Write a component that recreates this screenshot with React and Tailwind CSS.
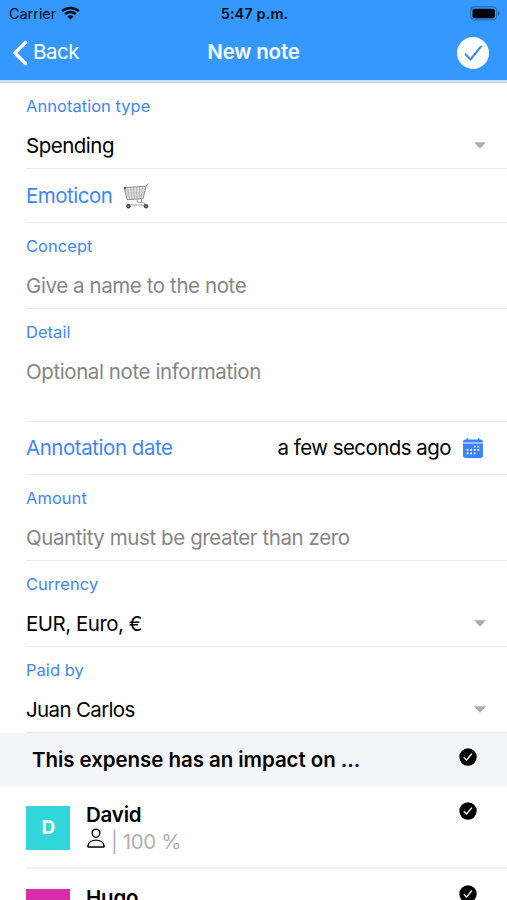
import React, { useState } from 'react';
import { IoPersonOutline } from 'react-icons/io5';

const people = [
  { name: 'David', share: '100 %', color: 'bg-[#31d6da]' },
  { name: 'Hugo', share: '100 %', color: 'bg-[#d92eaa]' },
];

function WifiIcon() {
  return (
    <svg width="19" height="14" viewBox="0 0 19 14" fill="none" stroke="#000814" strokeWidth="2.5">
      <path d="M1.2 5.1C5.8.8 13.2.8 17.8 5.1" />
      <path d="M4.2 8.2c3-2.8 7.6-2.8 10.6 0" />
      <path d="M9.5 13.6 6.3 10.5c1.8-1.7 4.6-1.7 6.4 0z" fill="#000814" stroke="none" />
    </svg>
  );
}

function BatteryIcon() {
  return (
    <svg width="30" height="15" viewBox="0 0 30 15" fill="none">
      <rect x=".7" y=".9" width="26" height="13" rx="3.6" stroke="#2570b8" strokeWidth="1.2" />
      <rect x="2.5" y="2.7" width="22.4" height="9.5" rx="2" fill="#000" />
      <path d="M28 5.2c2 .8 2 3.8 0 4.6z" fill="#225f9f" />
    </svg>
  );
}

function CartIcon() {
  return (
    <svg width="27" height="28" viewBox="0 0 27 28" fill="none">
      <path d="M1.5 5.5 22.5 4.8 20 16.5 4 18z" fill="#e2e2e2" />
      <path d="M4.5 5.4 6.5 17.5M7.5 5.1 9 17.3M10.5 4.9l1 12M13.5 4.7l.5 12M16.5 4.4v12.3M19.5 4.1 18 16.6" stroke="#a5a5a5" strokeWidth=".7" />
      <path d="M2 8.5 21.7 7M2.7 11.5 21 10.2M3.4 14.5 20.5 13.3" stroke="#b8b8b8" strokeWidth=".6" />
      <path d="M25.5 1.5 23 4.2 1.2 5.6 4 17.7 20.2 16.6 23 4.2" stroke="#8f8f8f" strokeWidth="1" strokeLinejoin="round" />
      <path d="M18.5 17v3l3 1.2v2L4 22.8M14 17.3l.5 3h5" stroke="#999" strokeWidth="1" />
      <circle cx="2" cy="6.2" r="1.1" fill="#555" />
      <circle cx="5.5" cy="24.3" r="2.2" fill="#4b4b4b" />
      <circle cx="23" cy="24.3" r="2.2" fill="#4b4b4b" />
      <circle cx="5.5" cy="24.3" r=".7" fill="#aaa" />
      <circle cx="23" cy="24.3" r=".7" fill="#aaa" />
    </svg>
  );
}

function CalendarIcon() {
  return (
    <svg width="20" height="20" viewBox="0 0 20 20" fill="#3b82fb">
      <path d="M0 4.4C0 2.6 1 1.6 2.6 1.6h.9V.8a.8.8 0 0 1 1.6 0v.8h9.8V.8a.8.8 0 0 1 1.6 0v.8h.9c1.6 0 2.6 1 2.6 2.8z" />
      <path d="M0 5.5h20v11.7c0 1.800-1 2.800-2.800 2.800H2.800C1 20 0 19 0 17.200z" />
      <g fill="#fff">
        <path d="M10.8 7.700h1.800v1.800h-1.800zM14.400 7.700h1.800v1.800h-1.800z" />
        <path d="M3.600 11h1.800v1.800H3.600zM7.200 11H9v1.800H7.200zM10.800 11h1.800v1.800h-1.800zM14.400 11h1.800v1.800h-1.800z" />
        <path d="M3.600 14.400h1.800v1.800H3.600zM7.200 14.400H9v1.800H7.200zM10.800 14.400h1.800v1.800h-1.800z" />
      </g>
    </svg>
  );
}

function CheckBadge() {
  return (
    <svg width="18" height="18" viewBox="0 0 18 18" fill="none">
      <circle cx="9" cy="9" r="8.7" fill="#000" />
      <path d="m5.2 9.7 2.3 2.4 5.1-6" stroke="#e2e2e2" strokeWidth="1.5" strokeLinecap="round" strokeLinejoin="round" />
    </svg>
  );
}

function Field({ label, children, select, height = 'h-[86px]' }) {
  return (
    <div className={`ml-[26px] shrink-0 border-b border-[#ebebeb] ${height}`}>
      <div className="pt-[12px] text-[16.5px] leading-[22px] tracking-[0.03px] text-[#4286f5]">{label}</div>
      <div className="mt-[15px] flex items-center justify-between pr-[21px] leading-[28px]">
        {children}
        {select && (
          <svg className="mb-[2px]" width="12" height="7" viewBox="0 0 12 7">
            <path d="M0 .3h12L6 6.8z" fill="#adadad" />
          </svg>
        )}
      </div>
    </div>
  );
}

function Person({ person }) {
  return (
    <div className="ml-[26px] flex h-[83.4px] shrink-0 border-b-2 border-[#f2f2f2] pr-[30px] pt-[20px]">
      <div className={`flex h-[44px] w-[44px] items-center justify-center pt-px text-[19px] font-bold text-white ${person.color}`}>
        {person.name[0]}
      </div>
      <div className="ml-4 flex-1">
        <div className="-mt-[5px] text-[20.5px] font-semibold leading-[28px] tracking-[-0.2px]">{person.name}</div>
        <div className="flex h-[26px] items-center text-[20.5px] text-[#b0b0b0]">
          <IoPersonOutline className="-ml-px mb-[8px] mr-[4px] text-[22px] text-black" />
          <span className="tracking-[-0.4px]">| {person.share}</span>
        </div>
      </div>
      <div className="-mt-[4px]">
        <CheckBadge />
      </div>
    </div>
  );
}

export default function App() {
  const [note, setNote] = useState({ concept: '', detail: '', amount: '' });

  const update = (e) => setNote({ ...note, [e.target.name]: e.target.value });

  const inputClass = 'h-[28px] w-full bg-transparent text-[20.5px] tracking-[-0.41px] outline-none placeholder:text-[#868686]';

  return (
    <div className="flex h-[900px] w-full flex-col overflow-hidden bg-white font-['Inter',sans-serif] text-[20.5px] tracking-[-0.5px] text-black">
      <header className="h-[83px] shrink-0 border-b-[3px] border-[#cbdffb] bg-[#3598fe] tracking-normal">
        <div className="grid h-[27px] grid-cols-3 items-center pl-[9px] pr-[7px] text-[#000814]">
          <div className="flex items-center gap-[5px] text-[14.4px]">
            <span>Carrier</span>
            <WifiIcon />
          </div>
          <div className="text-center text-[14.5px] font-semibold tracking-[0.1px]">5:47 p.m.</div>
          <div className="flex justify-end">
            <BatteryIcon />
          </div>
        </div>
        <div className="grid h-[51px] grid-cols-3 items-center pl-[18px] pr-[18px] text-white">
          <button className="-ml-[6px] flex items-center gap-[5px] tracking-[-0.5px]">
            <svg width="16" height="26" viewBox="0 0 16 26" fill="none">
              <path d="M13.5 2.5 3 13l10.5 10.5" stroke="#fff" strokeWidth="3.5" strokeLinecap="round" strokeLinejoin="round" />
            </svg>
            <span>Back</span>
          </button>
          <h1 className="whitespace-nowrap text-center font-semibold tracking-[-0.2px]">New note</h1>
          <button className="flex justify-end">
            <svg width="32" height="32" viewBox="0 0 32 32" fill="none">
              <circle cx="16" cy="16" r="16" fill="#fff" />
              <path d="m8.5 17.3 5 5.2 10.5-13" stroke="#3d8fe8" strokeWidth="2" strokeLinecap="round" strokeLinejoin="round" />
            </svg>
          </button>
        </div>
      </header>

      <Field label="Annotation type" select>
        <span>Spending</span>
      </Field>

      <div className="ml-[26px] flex h-[54px] shrink-0 items-center gap-[11px] border-b border-[#ebebeb]">
        <span className="pt-px text-[#4286f5]">Emoticon</span>
        <CartIcon />
      </div>

      <Field label="Concept">
        <input name="concept" value={note.concept} onChange={update} placeholder="Give a name to the note" className={inputClass} />
      </Field>

      <Field label="Detail" height="h-[113px]">
        <input name="detail" value={note.detail} onChange={update} placeholder="Optional note information" className={inputClass} />
      </Field>

      <div className="ml-[26px] flex h-[53px] shrink-0 items-center border-b border-[#ebebeb] pr-[24px]">
        <span className="pt-px tracking-[-0.45px] text-[#4286f5]">Annotation date</span>
        <span className="ml-auto mr-[12px] pt-px tracking-[-0.55px]">a few seconds ago</span>
        <CalendarIcon />
      </div>

      <Field label="Amount">
        <input name="amount" value={note.amount} onChange={update} placeholder="Quantity must be greater than zero" className={inputClass} />
      </Field>

      <Field label="Currency" select>
        <span>EUR, Euro, €</span>
      </Field>

      <Field label="Paid by" select>
        <span className="tracking-[-0.65px]">Juan Carlos</span>
      </Field>

      <div className="flex h-[53px] shrink-0 items-center justify-between bg-[#f3f5f8] pl-[32px] pr-[30px]">
        <span className="pt-[2px] font-semibold tracking-[-0.06px]">This expense has an impact on ...</span>
        <div className="mb-[6px]">
          <CheckBadge />
        </div>
      </div>

      {people.map((person) => (
        <Person key={person.name} person={person} />
      ))}
    </div>
  );
}
